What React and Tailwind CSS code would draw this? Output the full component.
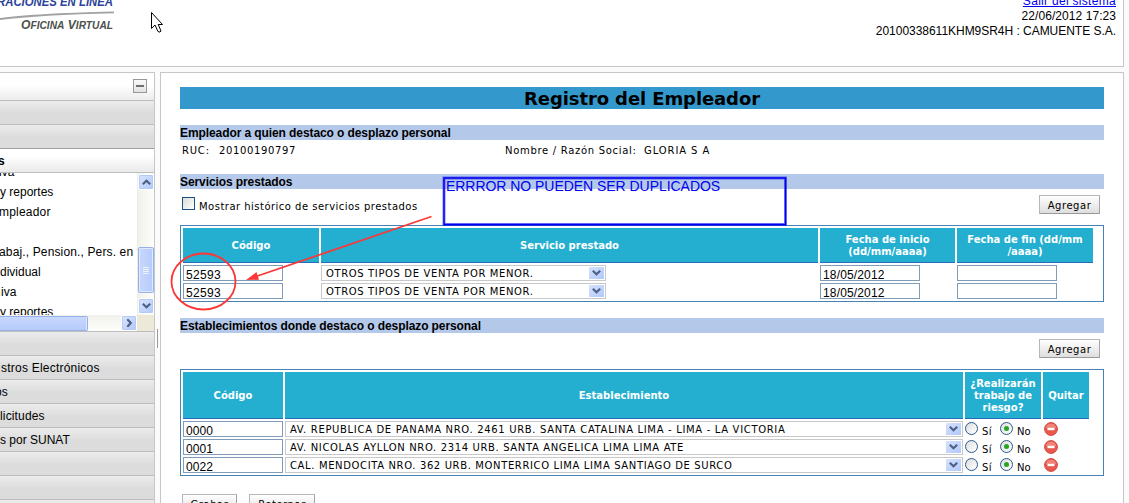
import React from 'react'

const verdana = "font-['DejaVu_Sans',sans-serif]"
const arial = "font-['Liberation_Sans',sans-serif]"

function Chevron({ className }) {
  return (
    <svg width="9" height="6" viewBox="0 0 9 6" className={className}>
      <path d="M0.8 0.8 L4.5 4.3 L8.2 0.8" fill="none" stroke="#4d6185" strokeWidth="2.2" />
    </svg>
  )
}

function MenuRow({ children, tone = 'gray' }) {
  return (
    <div
      className={
        'flex h-6 shrink-0 items-center overflow-hidden border-b pl-px text-[12px] whitespace-nowrap ' +
        (tone === 'open'
          ? 'border-[#bdbdbd] bg-linear-to-b from-white from-30% to-[#eaeaea] font-bold'
          : tone === 'dark'
            ? 'border-[#a0a0a0] bg-linear-to-b from-[#ececec] to-[#dcdcdc] to-55%'
            : 'border-[#bdbdbd] bg-linear-to-b from-[#ececec] to-[#dcdcdc] to-55%')
      }
    >
      {children}
    </div>
  )
}

function ScrollButton({ turn }) {
  return (
    <div className="flex size-4 shrink-0 items-center justify-center rounded-[2px] border border-white bg-linear-to-br from-[#dbe6fd] to-[#b0c8fa] shadow-[inset_0_0_0_1px_#b5c9f5]">
      <Chevron className={turn} />
    </div>
  )
}

function Sidebar() {
  return (
    <aside className={`flex h-[431px] w-[155px] shrink-0 flex-col overflow-hidden border-t border-r border-[#c6c6c6] bg-white ${arial}`}>
      <div className="flex h-7 shrink-0 justify-end border-b border-[#bdbdbd] bg-linear-to-b from-white from-45% to-[#ececec] pt-1.5 pr-[7px]">
        <div className="flex size-3.5 items-center justify-center border border-[#999] bg-linear-to-b from-[#fafafa] to-[#e2e2e2]">
          <div className="h-0.5 w-2 bg-[#707070]" />
        </div>
      </div>
      <MenuRow />
      <MenuRow tone="dark" />
      <MenuRow tone="open"><span className="-ml-[3px]">s</span></MenuRow>
      <div className="flex h-[142px] shrink-0">
        <div className="w-[137px] overflow-hidden text-[12px] leading-5 whitespace-nowrap">
          <div className="-mt-[11px] -ml-px">iva</div>
          <div>y reportes</div>
          <div className="-ml-px tracking-[0.2px]">mpleador</div>
          <div className="h-5" />
          <div className="-ml-px tracking-[0.14px]">abaj., Pension., Pers. en t</div>
          <div>dividual</div>
          <div className="pl-px">iva</div>
          <div>y reportes</div>
        </div>
        <div className="flex w-[17px] flex-col items-center border-l border-[#ecebe4] bg-linear-to-r from-[#f1f1ec] to-[#fdfdfb] pt-px">
          <ScrollButton turn="rotate-180" />
          <div className="mt-[57px] flex h-[46px] w-4 flex-col items-center justify-center gap-px rounded-[2px] border border-[#98b0e8] bg-linear-to-r from-[#c8d8fd] to-[#b6cbfb] shadow-[inset_0_0_0_1px_#dfe8fe]">
            <div className="h-px w-1.5 bg-[#eef4fe]" />
            <div className="h-px w-1.5 bg-[#eef4fe]" />
            <div className="h-px w-1.5 bg-[#eef4fe]" />
            <div className="h-px w-1.5 bg-[#eef4fe]" />
          </div>
          <div className="mt-[5px]"><ScrollButton turn="" /></div>
        </div>
      </div>
      <div className="flex h-[17px] shrink-0 border-b border-[#bdbdbd] bg-[#ece9d8]">
        <div className="flex w-[137px] items-center justify-between bg-linear-to-b from-[#f1f1ec] to-[#fdfdfb]">
          <div className="h-[15px] w-[88px] rounded-r-[2px] border border-l-0 border-[#98b0e8] bg-linear-to-b from-[#c8d8fd] to-[#b6cbfb] shadow-[inset_-1px_0_0_0_#dfe8fe]" />
          <ScrollButton turn="-rotate-90" />
        </div>
      </div>
      <MenuRow />
      <MenuRow><span className="tracking-[0.22px]">stros Electrónicos</span></MenuRow>
      <MenuRow><span className="-ml-[6px]">os</span></MenuRow>
      <MenuRow><span className="-ml-px tracking-[0.15px]">licitudes</span></MenuRow>
      <MenuRow><span className="-ml-px">s por SUNAT</span></MenuRow>
      <MenuRow />
      <MenuRow />
      <MenuRow />
    </aside>
  )
}

function Header() {
  return (
    <header className="flex h-[67px] w-[1124px] shrink-0 justify-between overflow-hidden border-r border-b border-[#c6c6c6] bg-white">
      <svg width="200" height="66" viewBox="0 0 200 66">
        <g fontFamily="Liberation Sans" fontWeight="bold" fontStyle="italic">
          <text x="-3" y="6.3" fontSize="13" fill="#2b4399" textLength="116" lengthAdjust="spacingAndGlyphs">RACIONES EN LÍNEA</text>
          <text x="21" y="29" fontSize="12.5" fill="#4b504b" textLength="92" lengthAdjust="spacingAndGlyphs">
            O<tspan fontSize="10.5">FICINA</tspan> V<tspan fontSize="10.5">IRTUAL</tspan>
          </text>
        </g>
        <path d="M0 18 Q30 13.5 114 11.5 L114 13.2 Q40 15 0 20 Z" fill="#a2a2a2" />
        <path d="M151.5 12.5 V28.5 L155 25 L158 31.5 Q160.5 33 161 31 L158.2 24.5 H162.5 Z" fill="white" stroke="black" strokeWidth="1" />
      </svg>
      <div className={`-mt-[6px] flex flex-col items-end pr-[7px] text-[12px] leading-[15px] ${arial}`}>
        <a className="tracking-[0.3px] text-[#0000ee] underline">Salir del sistema</a>
        <span className="tracking-[0.06px]">22/06/2012 17:23</span>
        <span className="tracking-[-0.03px]">20100338611KHM9SR4H : CAMUENTE S.A.</span>
      </div>
    </header>
  )
}

function SectionBar({ children, className }) {
  return (
    <h2 className={`h-[15px] bg-[#b4c8ea] text-[12px] leading-[16px] font-bold tracking-[-0.09px] whitespace-nowrap ${arial} ${className}`}>{children}</h2>
  )
}

function HeadCell({ children, className }) {
  return (
    <div className={`flex items-center justify-center border-b border-[#2b6cb8] bg-[#24afd0] pt-0.5 text-center text-[10px] leading-3 font-bold text-white ${className}`}>
      <span>{children}</span>
    </div>
  )
}

function TextInput({ children }) {
  return (
    <div className={`h-4 w-[100px] overflow-hidden border border-[#7f9db9] bg-white pl-[2px] text-[12px] leading-[18px] whitespace-nowrap ${arial}`}>
      {children}
    </div>
  )
}

function SelectBox({ children, className, textClass }) {
  return (
    <div className={`flex h-4 items-center justify-between border border-[#c8c8c8] bg-white pr-px pl-1 ${className}`}>
      <span className={`pt-0.5 text-[10px] leading-[14px] whitespace-nowrap ${textClass}`}>{children}</span>
      <div className="flex h-3 w-[15px] items-center justify-center bg-linear-to-br from-[#d6e2fd] to-[#b0c8fa]">
        <Chevron />
      </div>
    </div>
  )
}

function Radio({ checked }) {
  return (
    <div className="flex size-[13px] shrink-0 items-center justify-center rounded-full border border-[#2a5a8c] bg-linear-to-br from-[#dedede] to-white">
      {checked && <div className="size-[5px] rounded-full bg-[#27a527]" />}
    </div>
  )
}

function Button({ children, className }) {
  return (
    <button className={`flex h-[19px] items-center justify-center border border-[#b8b8b8] border-r-[#a5a5a5] border-b-[#999] bg-linear-to-b from-white to-[#dedede] pt-0.5 text-[10px] leading-3 tracking-[0.55px] ${className}`}>
      {children}
    </button>
  )
}

function ServiceRow() {
  return (
    <div className="grid grid-cols-[136px_497px_135px_136px] gap-0.5">
      <TextInput><span className="tracking-[0.35px]">52593</span></TextInput>
      <SelectBox className="w-[285px]" textClass="tracking-[0.63px]">OTROS TIPOS DE VENTA POR MENOR.</SelectBox>
      <TextInput><span className="tracking-[0.15px]">18/05/2012</span></TextInput>
      <TextInput />
    </div>
  )
}

function PlaceRow({ code, name, spacing }) {
  return (
    <div className="grid h-4 grid-cols-[100px_678px_76px_46px] gap-0.5">
      <TextInput><span className="tracking-[0.1px]">{code}</span></TextInput>
      <SelectBox className="w-[678px]" textClass={spacing}>{name}</SelectBox>
      <div className="flex items-start pt-px text-[10px]">
        <Radio />
        <span className="mt-1 ml-[4px] w-[18px] leading-3 tracking-[0.3px]">Sí</span>
        <Radio checked />
        <span className="mt-1 ml-[4px] leading-3">No</span>
      </div>
      <div className="pt-px pl-px">
        <svg width="14" height="14" viewBox="0 0 14 14">
          <circle cx="7" cy="7" r="6.4" fill="#e9584c" stroke="#d04a40" strokeWidth="1" />
          <path d="M1.8 6 A5.3 5.3 0 0 1 12.2 6 Z" fill="#f08478" />
          <rect x="3.5" y="5.8" width="7" height="2.4" fill="white" />
        </svg>
      </div>
    </div>
  )
}

function Annotations() {
  return (
    <div className="pointer-events-none absolute inset-0">
      <svg width="1129" height="503" viewBox="0 0 1129 503" className="absolute inset-0">
        <rect x="444" y="178" width="341.5" height="46.5" fill="none" stroke="#0000f0" strokeOpacity="0.5" strokeWidth="3" />
        <rect x="444" y="178" width="341.5" height="46.5" fill="none" stroke="#0000f0" strokeWidth="1.4" />
        <ellipse cx="203.5" cy="281.5" rx="32" ry="28" fill="none" stroke="#fb3838" strokeWidth="1.8" />
        <path d="M431.5 216.5 L256 276.5" stroke="#fb3838" strokeWidth="1.8" />
        <path d="M246 280 L256.5 272 L259 279.8 Z" fill="#fb3838" />
      </svg>
      <span className={`absolute top-[178px] left-[446px] text-[14px] leading-4 tracking-[-0.04px] whitespace-nowrap text-[#0000f0] ${arial}`}>
        ERRROR NO PUEDEN SER DUPLICADOS
      </span>
    </div>
  )
}

export default function App() {
  return (
    <div className={`relative flex h-[503px] w-[1129px] flex-col gap-[5px] overflow-hidden bg-[#fbfbfb] text-black ${verdana}`}>
      <Header />
      <div className="flex">
        <Sidebar />
        <div className="h-[431px] w-[5px] shrink-0 pt-[257px] pl-[2px]">
          <div className="h-[19px] w-px bg-[#999]" />
        </div>
        <main className="h-[431px] w-[964px] shrink-0 overflow-hidden border border-b-0 border-[#c6c6c6] bg-white pt-3.5 pr-[19px] pl-[19px]">
          <h1 className="h-[22px] bg-[#3399cc] text-center text-[18px] leading-[24px] font-bold tracking-[-0.1px]">Registro del Empleador</h1>
          <SectionBar className="mt-4">Empleador a quien destaco o desplazo personal</SectionBar>
          <div className="flex h-[34px] pt-[5px] pl-0.5 text-[10px] leading-3 whitespace-nowrap">
            <span className="w-[37px] tracking-[0.8px]">RUC:</span>
            <span className="w-[286px] tracking-[0.65px]">20100190797</span>
            <span className="w-[139px] tracking-[0.7px]">Nombre / Razón Social:</span>
            <span className="tracking-[0.9px]">GLORIA S A</span>
          </div>
          <SectionBar>Servicios prestados</SectionBar>
          <div className="flex h-9 justify-between pt-1.5 pr-1 pl-0.5">
            <div className="flex pt-0.5">
              <div className="size-[13px] border border-[#1c5180] bg-linear-to-br from-[#dcdcd7] to-white" />
              <span className="mt-[4px] ml-1 text-[10px] leading-3 tracking-[0.48px]">Mostrar histórico de servicios prestados</span>
            </div>
            <Button className="w-[61px]">Agregar</Button>
          </div>
          <div className="flex h-[77px] flex-col gap-0.5 border border-[#4682b4] p-0.5">
            <div className="grid h-[35px] grid-cols-[136px_497px_135px_136px] gap-0.5">
              <HeadCell>Código</HeadCell>
              <HeadCell>Servicio prestado</HeadCell>
              <HeadCell>Fecha de inicio<br />(dd/mm/aaaa)</HeadCell>
              <HeadCell>Fecha de fin (dd/mm<br />/aaaa)</HeadCell>
            </div>
            <ServiceRow />
            <ServiceRow />
          </div>
          <SectionBar className="mt-4">Establecimientos donde destaco o desplazo personal</SectionBar>
          <div className="flex h-9 justify-end pt-1.5 pr-1">
            <Button className="w-[61px]">Agregar</Button>
          </div>
          <div className="flex h-[107px] flex-col gap-0.5 border border-[#4682b4] p-0.5">
            <div className="grid h-[47px] grid-cols-[100px_678px_76px_46px] gap-0.5">
              <HeadCell>Código</HeadCell>
              <HeadCell>Establecimiento</HeadCell>
              <HeadCell>¿Realizarán<br />trabajo de<br />riesgo?</HeadCell>
              <HeadCell>Quitar</HeadCell>
            </div>
            <PlaceRow code="0000" spacing="tracking-[0.67px]" name="AV. REPUBLICA DE PANAMA NRO. 2461 URB. SANTA CATALINA LIMA - LIMA - LA VICTORIA" />
            <PlaceRow code="0001" spacing="tracking-[0.64px]" name="AV. NICOLAS AYLLON NRO. 2314 URB. SANTA ANGELICA LIMA LIMA ATE" />
            <PlaceRow code="0022" spacing="tracking-[0.63px]" name="CAL. MENDOCITA NRO. 362 URB. MONTERRICO LIMA LIMA SANTIAGO DE SURCO" />
          </div>
          <div className="flex gap-3 pt-[18px] pl-0.5">
            <Button className="w-[55px]">Grabar</Button>
            <Button className="w-[66px]">Retornar</Button>
          </div>
        </main>
      </div>
      <Annotations />
    </div>
  )
}
